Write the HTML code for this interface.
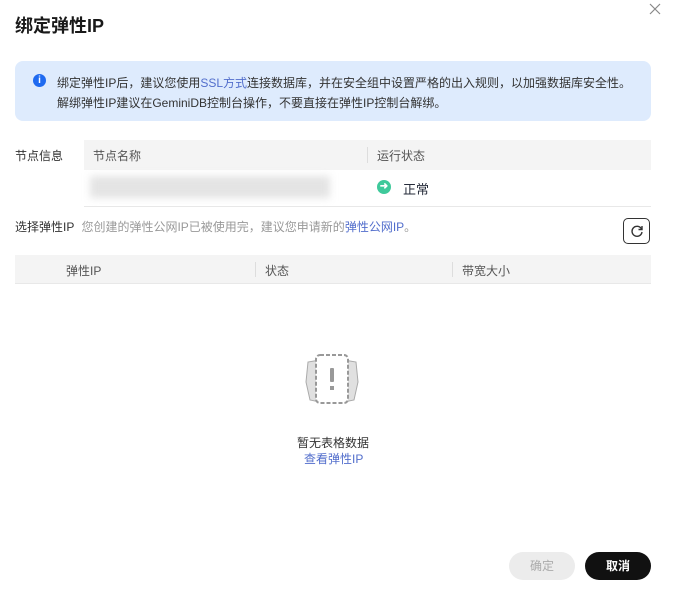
<!DOCTYPE html>
<html><head><meta charset="utf-8"><style>
*{margin:0;padding:0;box-sizing:border-box}
body{width:674px;height:592px;background:#fff;font-family:"Liberation Sans","Noto Sans CJK SC",sans-serif;font-size:12px;color:#252b3a;position:relative;overflow:hidden}
.a{position:absolute}
.blue{color:#526ecc}
</style></head><body>
<div class="a" style="left:15px;top:12px;font-size:18px;font-weight:bold;color:#191919">绑定弹性IP</div>
<svg class="a" style="left:649px;top:3px" width="12" height="12"><path d="M1 1L11 11M11 1L1 11" stroke="#888" stroke-width="1.2"/></svg>
<div class="a" style="left:15px;top:61px;width:636px;height:60px;background:#deebfd;border-radius:8px"></div>
<div class="a" style="left:33px;top:74px;width:13px;height:13px;border-radius:50%;background:#1f6af0;color:#fff;font-size:10px;font-weight:bold;text-align:center;line-height:13px">i</div>
<div class="a" style="left:57px;top:73px;line-height:20px;color:#333">绑定弹性IP后，建议您使用<span class="blue">SSL方式</span>连接数据库，并在安全组中设置严格的出入规则，以加强数据库安全性。<br>解绑弹性IP建议在GeminiDB控制台操作，不要直接在弹性IP控制台解绑。</div>
<div class="a" style="left:15px;top:147px;color:#333">节点信息</div>
<div class="a" style="left:84px;top:140px;width:567px;height:30px;background:#f4f4f4"></div>
<div class="a" style="left:93px;top:147px;color:#555">节点名称</div>
<div class="a" style="left:367px;top:147px;width:1px;height:16px;background:#ddd"></div>
<div class="a" style="left:377px;top:147px;color:#555">运行状态</div>
<div class="a" style="left:90px;top:176px;width:240px;height:22px;background:#e4e4e4;filter:blur(4px)"></div>
<div class="a" style="left:84px;top:206px;width:567px;height:1px;background:#e8e8e8"></div>
<div class="a" style="left:377px;top:180px;width:14px;height:14px;border-radius:50%;background:#3fc99b;color:#fff;font-size:10px;font-weight:bold;text-align:center;line-height:14px">➜</div>
<div class="a" style="left:403px;top:179px;font-size:13px">正常</div>
<div class="a" style="left:15px;top:218px;color:#333">选择弹性IP <span style="color:#999;margin-left:4px">您创建的弹性公网IP已被使用完，建议您申请新的<span class="blue">弹性公网IP</span>。</span></div>
<div class="a" style="left:623px;top:218px;width:27px;height:26px;border:1px solid #333;border-radius:5px"></div>
<svg class="a" style="left:629px;top:223px" width="16" height="16" viewBox="0 0 16 16"><path d="M12.5 6A5 5 0 1 0 13 9" fill="none" stroke="#333" stroke-width="1.4"/><path d="M13 3V6.5H9.5" fill="none" stroke="#333" stroke-width="1.4"/></svg>
<div class="a" style="left:15px;top:255px;width:636px;height:29px;background:#f4f4f4;border-bottom:1px solid #e8e8e8"></div>
<div class="a" style="left:66px;top:262px;color:#555">弹性IP</div>
<div class="a" style="left:255px;top:262px;width:1px;height:15px;background:#ddd"></div>
<div class="a" style="left:265px;top:262px;color:#555">状态</div>
<div class="a" style="left:452px;top:262px;width:1px;height:15px;background:#ddd"></div>
<div class="a" style="left:462px;top:262px;color:#555">带宽大小</div>
<svg class="a" style="left:304px;top:352px" width="56" height="56" viewBox="0 0 56 56"><path d="M4 10L2 30L6 48L16 50V8Z" fill="#e0e0e0" stroke="#aaa"/><path d="M52 10L54 30L50 48L40 50V8Z" fill="#e0e0e0" stroke="#aaa"/><rect x="12" y="3" width="32" height="48" rx="4" fill="#fff" stroke="#999" stroke-width="2" stroke-dasharray="4 2"/><rect x="26" y="16" width="4" height="14" rx="1" fill="#999"/><rect x="26" y="34" width="4" height="4" fill="#999"/></svg>
<div class="a" style="left:297px;top:434px;color:#333">暂无表格数据</div>
<div class="a" style="left:304px;top:450px" class="blue"><span class="blue">查看弹性IP</span></div>
<div class="a" style="left:509px;top:552px;width:66px;height:28px;border-radius:14px;background:#ececec;color:#aaa;text-align:center;line-height:28px">确定</div>
<div class="a" style="left:585px;top:552px;width:66px;height:28px;border-radius:14px;background:#111;color:#fff;text-align:center;line-height:28px;font-weight:bold">取消</div>
</body></html>
